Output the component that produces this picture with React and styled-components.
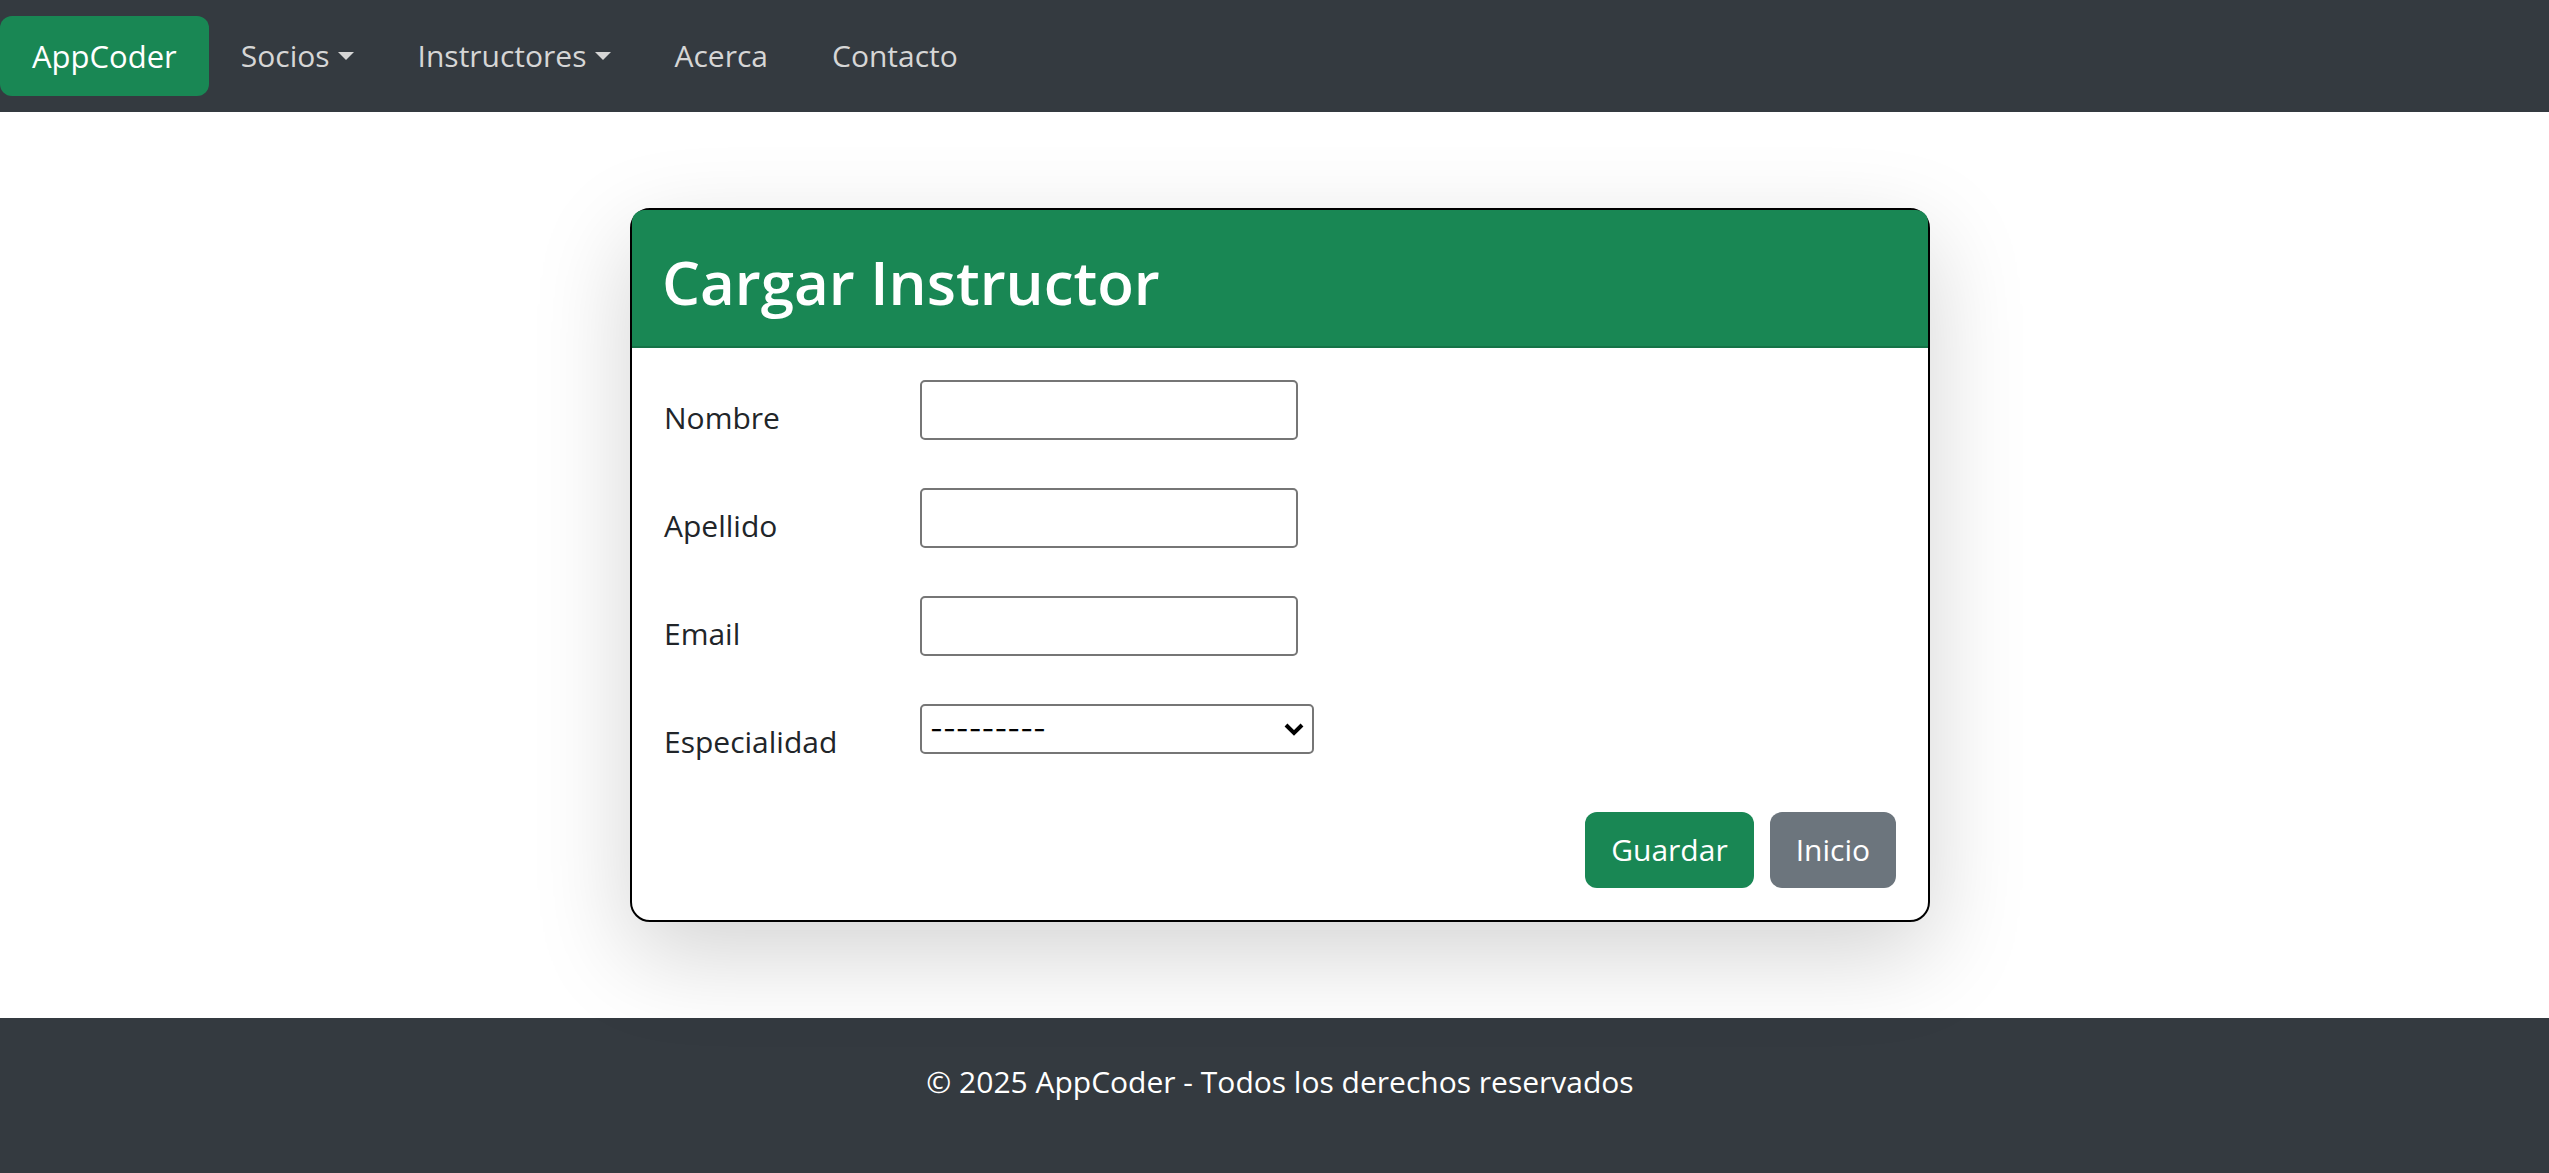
import React from "react";
import styled, { createGlobalStyle } from "styled-components";

const GlobalStyle = createGlobalStyle`
  *, *::before, *::after { box-sizing: border-box; }
  body {
    margin: 0;
    background: #fff;
    color: #212529;
    font-family: "Segoe UI", "Open Sans", "Noto Sans", sans-serif;
    font-size: 30px;
    line-height: 48px;
  }
`;

const Page = styled.div`
  display: flex;
  flex-direction: column;
  min-height: 100vh;
`;

const Navbar = styled.nav`
  display: flex;
  align-items: center;
  padding: 16px 0;
  background: #343a40;
`;

const NavList = styled.ul`
  display: flex;
  margin: 0;
  padding: 0;
  list-style: none;
`;

const Brand = styled.a`
  padding: 16px 32px;
  border-radius: 12px;
  background: #198754;
  color: #fff;
  font-size: 31px;
  text-decoration: none;
`;

const NavLink = styled.a`
  display: flex;
  align-items: center;
  gap: 8px;
  padding: 16px 32px;
  color: #d6d6d6;
  text-decoration: none;
`;

const Caret = styled.span`
  border: 8px solid transparent;
  border-top-color: currentColor;
  border-bottom: 0;
`;

const Main = styled.main`
  padding: 96px 0 96px 11px;
`;

const Card = styled.section`
  position: relative;
  max-width: 1300px;
  margin: 0 auto;
  border: 2px solid #000;
  border-radius: 20px;
  background: #fff;
  box-shadow: 0 32px 96px rgba(0, 0, 0, 0.175);
`;

const CardHeader = styled.header`
  padding: 32px 30px 24px;
  border-bottom: 2px solid #157347;
  border-radius: 12px 12px 0 0;
  background: #198754;
`;

const Title = styled.h1`
  margin: 0;
  color: #fff;
  font-size: 60px;
  font-weight: 600;
  line-height: 80px;
`;

const Form = styled.form`
  display: flex;
  flex-direction: column;
  gap: 32px;
  padding: 32px;
`;

const Row = styled.div`
  display: grid;
  grid-template-columns: 256px 1fr;
  align-items: start;
`;

const Label = styled.label`
  padding: 14px 0;
`;

const TextInput = styled.input`
  width: 378px;
  height: 60px;
  padding: 2px 4px;
  border: 2px solid #767676;
  border-radius: 5px;
  background: #fff;
  font: inherit;
`;

const SelectBox = styled.div`
  display: grid;
  width: 394px;
  height: 50px;
`;

const Select = styled.select`
  grid-area: 1 / 1;
  appearance: none;
  padding: 0 8px;
  border: 2px solid #767676;
  border-radius: 5px;
  background: #fff;
  color: #000;
  font-family: Inter, sans-serif;
  font-size: 28px;
`;

const Chevron = styled.svg`
  grid-area: 1 / 1;
  place-self: center end;
  width: 20px;
  height: 16px;
  margin-right: 10px;
  pointer-events: none;
`;

const Actions = styled.div`
  display: flex;
  justify-content: flex-end;
  gap: 16px;
`;

const Button = styled.button`
  padding: 14px 26px;
  border: 0;
  border-radius: 12px;
  background: ${({ $secondary }) => ($secondary ? "#6c757d" : "#198754")};
  color: #fff;
  font: inherit;
`;

const Footer = styled.footer`
  flex: 1;
  padding: 40px 0 40px 11px;
  background: #343a40;
  color: #fff;
  text-align: center;
`;

const FooterText = styled.p`
  margin: 0;
`;

const links = [
  { label: "Socios", menu: true },
  { label: "Instructores", menu: true },
  { label: "Acerca" },
  { label: "Contacto" },
];

const fields = [
  { id: "nombre", label: "Nombre", type: "text" },
  { id: "apellido", label: "Apellido", type: "text" },
  { id: "email", label: "Email", type: "email" },
];

export default function App() {
  return (
    <Page>
      <GlobalStyle />
      <Navbar>
        <Brand href="#">AppCoder</Brand>
        <NavList>
          {links.map(({ label, menu }) => (
            <li key={label}>
              <NavLink href="#">
                {label}
                {menu && <Caret />}
              </NavLink>
            </li>
          ))}
        </NavList>
      </Navbar>
      <Main>
        <Card>
          <CardHeader>
            <Title>Cargar Instructor</Title>
          </CardHeader>
          <Form>
            {fields.map(({ id, label, type }) => (
              <Row key={id}>
                <Label htmlFor={id}>{label}</Label>
                <TextInput id={id} name={id} type={type} />
              </Row>
            ))}
            <Row>
              <Label htmlFor="especialidad">Especialidad</Label>
              <SelectBox>
                <Select id="especialidad" name="especialidad" defaultValue="">
                  <option value="">---------</option>
                </Select>
                <Chevron viewBox="0 0 20 16" fill="none" stroke="#000" strokeWidth="4">
                  <path d="M2 4l8 8 8-8" />
                </Chevron>
              </SelectBox>
            </Row>
            <Actions>
              <Button type="submit">Guardar</Button>
              <Button type="button" $secondary>Inicio</Button>
            </Actions>
          </Form>
        </Card>
      </Main>
      <Footer>
        <FooterText>© 2025 AppCoder - Todos los derechos reservados</FooterText>
      </Footer>
    </Page>
  );
}
